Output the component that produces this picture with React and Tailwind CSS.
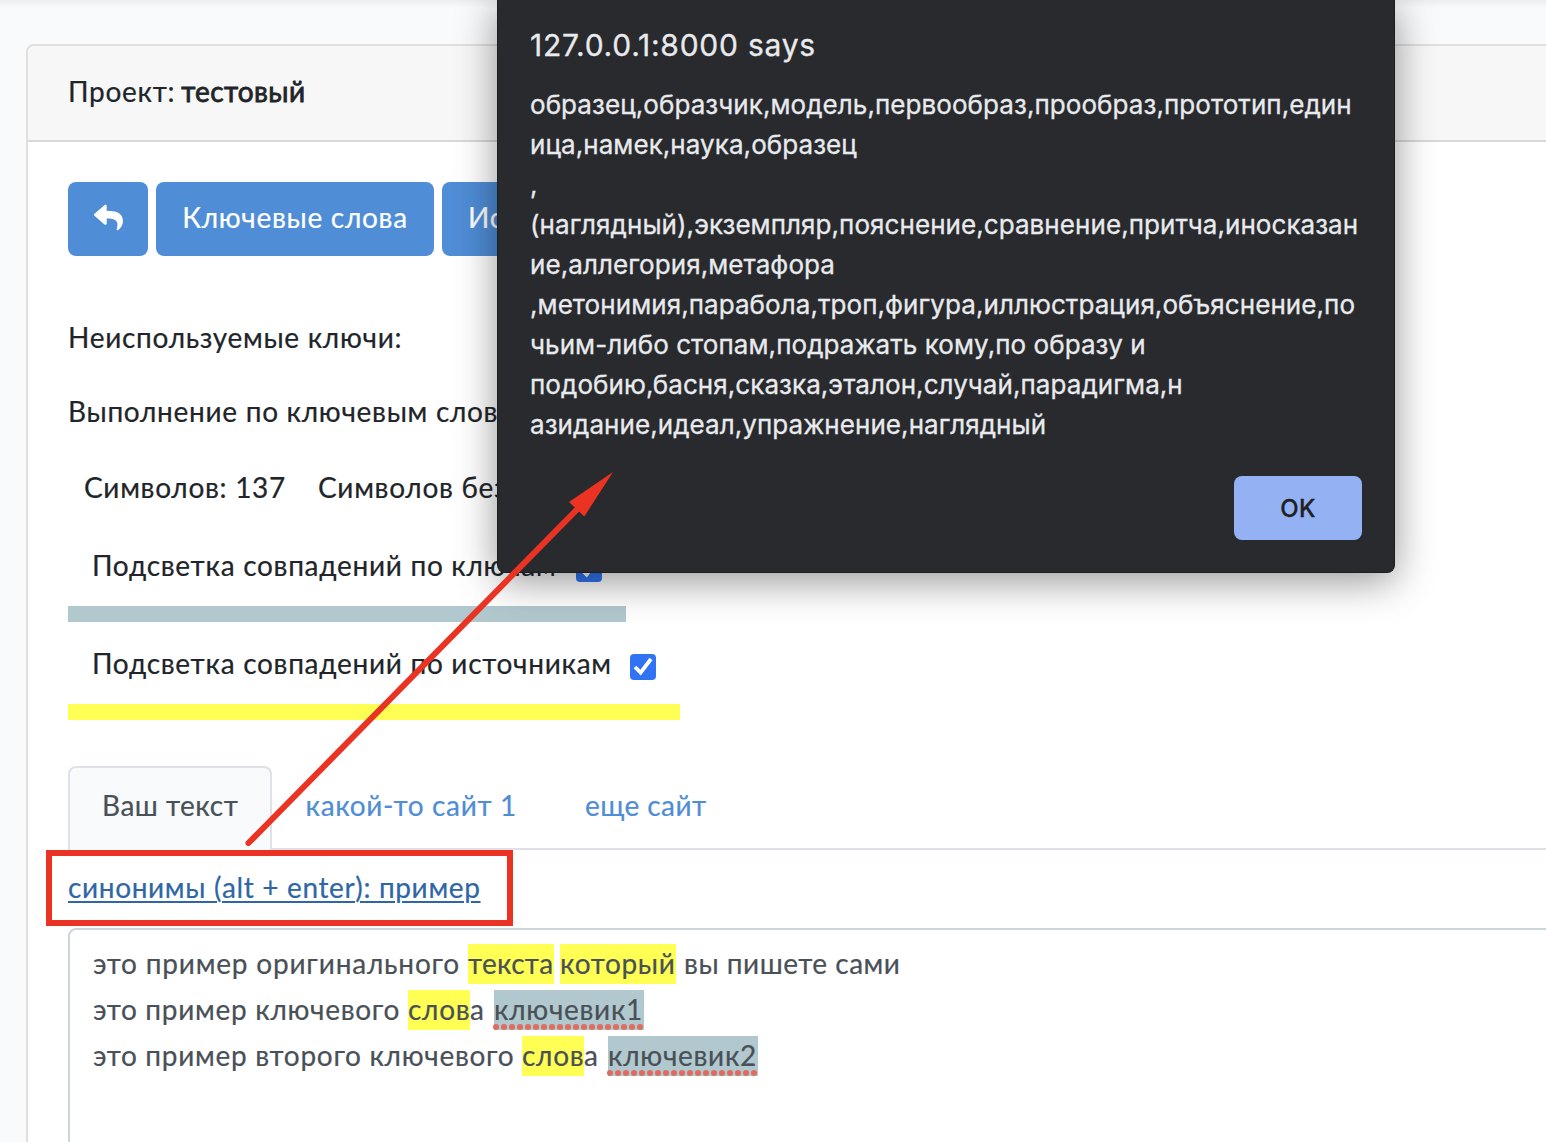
import React from "react";

function Reply() {
  return (
    <svg viewBox="0 0 512 512" className="h-[29px] w-[29px]" fill="currentColor">
      <path d="M8.309 189.836 184.313 37.851C199.719 24.546 224 35.347 224 56.015v80.053c160.629 1.839 288 34.032 288 186.258 0 61.441-39.581 122.309-83.333 154.132-13.653 9.931-33.111-2.533-28.077-18.631 45.344-145.012-21.507-183.51-176.59-185.742V360c0 20.7-24.3 31.453-39.687 18.164l-176.004-152c-11.071-9.562-11.086-26.753 0-36.328z" />
    </svg>
  );
}

function Check() {
  return (
    <span className="flex h-[26px] w-[26px] shrink-0 items-center justify-center rounded-[4px] bg-[#3174f3]">
      <svg viewBox="0 0 26 26" className="h-[26px] w-[26px]" fill="none" stroke="#fff" strokeWidth="3.8" strokeLinejoin="miter">
        <path d="M5 13 L10.6 18.6 L21 5" />
      </svg>
    </span>
  );
}

function Button({ children, className = "" }) {
  return (
    <button className={"flex h-[74px] shrink-0 items-center rounded-[8px] bg-[#4f8dd6] pb-1 text-white " + className}>
      {children}
    </button>
  );
}

const Mark = ({ children, className = "" }) => (
  <span className={"mt-1 h-10 bg-[#ffff54] leading-[38px] " + className}>{children}</span>
);

const DOTS = Array.from({ length: 19 }, (_, i) => 3 + i * 8);

const Keyword = ({ children }) => (
  <span className="relative mt-1 h-10 w-[150px] bg-[#b1c8ce] leading-[38px]">
    {children}
    <svg className="absolute -left-[1px] bottom-0 h-[6px] w-[152px]" viewBox="0 0 152 6" fill="#e06c60">
      {DOTS.map((x) => (
        <circle key={x} cx={x} cy="3" r="3" />
      ))}
    </svg>
  </span>
);

const LINES = [
  "образец,образчик,модель,первообраз,прообраз,прототип,един",
  "ица,намек,наука,образец",
  ",",
  "(наглядный),экземпляр,пояснение,сравнение,притча,иносказан",
  "ие,аллегория,метафора",
  ",метонимия,парабола,троп,фигура,иллюстрация,объяснение,по",
  "чьим-либо стопам,подражать кому,по образу и",
  "подобию,басня,сказка,эталон,случай,парадигма,н",
  "азидание,идеал,упражнение,наглядный",
];

function Dialog() {
  return (
    <div className="absolute left-[497px] top-0 flex h-[573px] w-[898px] flex-col rounded-b-[8px] border border-t-0 border-[#1d1e20] bg-[#292a2d] px-8 font-['Inter',sans-serif] text-[#e8eaed] shadow-[0_8px_40px_rgba(0,0,0,0.42)] [-webkit-text-stroke:0.3px]">
      <div className="mt-[25px] h-10 whitespace-nowrap text-[30px] leading-10 tracking-[0.76px]">127.0.0.1:8000 says</div>
      <div className="mt-5 text-[26px] leading-10 tracking-[0.065px]">
        {LINES.map((l) => (
          <div key={l} className="h-10 whitespace-nowrap">{l}</div>
        ))}
      </div>
      <button className="mt-[31px] h-16 w-32 self-end rounded-[8px] bg-[#94b1f3] pt-px text-[24px] font-medium tracking-[0.3px] text-[#202124]">OK</button>
    </div>
  );
}

function Annotation() {
  return (
    <>
      <div className="absolute left-[45.5px] top-[849.5px] h-[76.5px] w-[467px] border-[6px] border-[#ea3323]" />
      <svg className="absolute left-0 top-0 h-[1142px] w-[1546px]" viewBox="0 0 1546 1142">
        <path d="M248.5 843 L578 508.5" stroke="#ea3323" strokeWidth="6" strokeLinecap="round" />
        <path d="M613 472 L569 502 L584.3 516.5 Z" fill="#ea3323" />
      </svg>
    </>
  );
}

export default function App() {
  return (
    <div className="relative h-[1142px] w-[1546px] overflow-hidden bg-[#f8fafc] pl-[26px] pt-[44px] font-['Lato',sans-serif] text-[28px] leading-[46px] tracking-[0.7px] text-[#212529] [-webkit-text-stroke:0.2px]">
      <div className="absolute left-0 top-0 h-[8px] w-full bg-gradient-to-b from-[#ededf0] to-[#f8fafc]" />
      <div className="h-[1200px] w-[1600px] rounded-[8px] border-2 border-[#dfdfdf] bg-white whitespace-nowrap">
        <div className="h-24 rounded-t-[6px] border-b-2 border-[#d8d8d8] bg-[#f7f7f7] px-10 pt-[22px]">
          Проект: <span className="-ml-[2px] tracking-[0.35px] [-webkit-text-stroke:0.8px]">тестовый</span>
        </div>
        <div className="flex flex-col px-10 pt-10">
          <div className="flex gap-2">
            <Button className="w-20 justify-center"><Reply /></Button>
            <Button className="w-[278px] justify-center">Ключевые слова</Button>
            <Button className="w-[220px] px-[26px]">Ис</Button>
          </div>
          <div className="mt-[58px]">Неиспользуемые ключи:</div>
          <div className="mt-7">Выполнение по ключевым словам</div>
          <div className="mt-[30px] flex gap-8 px-4">
            <span>Символов: 137</span>
            <span>Символов без пробелов</span>
          </div>
          <div className="mt-8 flex h-20 w-[558px] items-start justify-between border-b-[16px] border-[#b1c8ce] px-6">
            <span>Подсветка совпадений по ключам</span>
            <span className="pt-[14px]"><Check /></span>
          </div>
          <div className="mt-[18px] flex h-20 w-[612px] items-start justify-between border-b-[16px] border-[#ffff54] px-6">
            <span>Подсветка совпадений по источникам</span>
            <span className="pt-[14px]"><Check /></span>
          </div>
          <div className="mt-[46px] flex h-[84px] border-b-2 border-[#dee2e6]">
            <div className="h-[84px] w-[204px] rounded-t-[8px] border-2 border-b-0 border-[#dee2e6] bg-[#f8fafc] px-8 pt-[14px] tracking-[0.5px] text-[#495057]">Ваш текст</div>
            <div className="w-[279px] px-[33.5px] pt-4 tracking-[0.65px] text-[#4f8dd6]">какой-то сайт 1</div>
            <div className="px-[34px] pt-4 tracking-[0.4px] text-[#4f8dd6]">еще сайт</div>
          </div>
          <div className="mt-[14px] tracking-[0.64px] text-[#2f66a5] underline decoration-2 underline-offset-[2.5px]">синонимы (alt + enter): пример</div>
          <div className="mt-[18px] h-[300px] rounded-[8px] border-2 border-[#ced4da] pl-[23px] pt-[10px] text-[#495057]">
            <div className="flex h-[46px] items-start whitespace-pre">
              <span className="w-[375px] tracking-[0.8px]">это пример оригинального</span>
              <Mark className="w-[86px] tracking-[0.3px]">текста</Mark>
              <Mark className="ml-1.5 w-[116px]">который</Mark>
              <span className="ml-2 tracking-[0.5px]">вы пишете сами</span>
            </div>
            <div className="flex h-[46px] items-start whitespace-pre">
              <span className="w-[315px]">это пример ключевого</span>
              <Mark className="w-[62px]">слов</Mark>
              <span className="w-6">а</span>
              <Keyword>ключевик1</Keyword>
            </div>
            <div className="flex h-[46px] items-start whitespace-pre">
              <span className="w-[429px]">это пример второго ключевого</span>
              <Mark className="w-[62px]">слов</Mark>
              <span className="w-6">а</span>
              <Keyword>ключевик2</Keyword>
            </div>
          </div>
        </div>
      </div>
      <Dialog />
      <Annotation />
    </div>
  );
}
